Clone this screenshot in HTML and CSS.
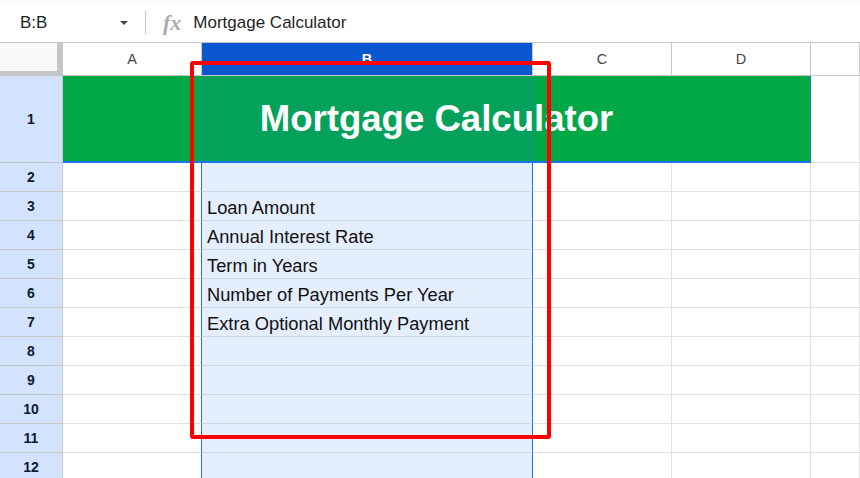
FILE: index.html
```html
<!DOCTYPE html>
<html lang="en">
<head>
    <meta charset="UTF-8">
    <meta name="viewport" content="width=device-width, initial-scale=1.0">
    <title>Mortgage Calculator</title>
    <link rel="stylesheet" href="styles.css">
</head>
<body>
    <div class="sheet">
        <div class="toolbar">
            <div class="namebox">
                <span>B:B</span>
                <span class="caret"></span>
            </div>
            <div class="divider"></div>
            <span class="fx">fx</span>
            <span class="formula">Mortgage Calculator</span>
        </div>

        <div class="grid">
            <div class="corner"></div>
            <div class="colhead">A</div>
            <div class="colhead active">B</div>
            <div class="colhead">C</div>
            <div class="colhead">D</div>
            <div class="colhead"></div>

            <div class="rowhead">1</div>
            <div class="title">Mortgage Calculator</div>
            <div class="cell"></div>

            <div class="rowhead">2</div>
            <div class="cell a"></div><div class="cell b"></div><div class="cell"></div><div class="cell"></div><div class="cell"></div>
            <div class="rowhead">3</div>
            <div class="cell a"></div><div class="cell b">Loan Amount</div><div class="cell"></div><div class="cell"></div><div class="cell"></div>
            <div class="rowhead">4</div>
            <div class="cell a"></div><div class="cell b">Annual Interest Rate</div><div class="cell"></div><div class="cell"></div><div class="cell"></div>
            <div class="rowhead">5</div>
            <div class="cell a"></div><div class="cell b">Term in Years</div><div class="cell"></div><div class="cell"></div><div class="cell"></div>
            <div class="rowhead">6</div>
            <div class="cell a"></div><div class="cell b">Number of Payments Per Year</div><div class="cell"></div><div class="cell"></div><div class="cell"></div>
            <div class="rowhead">7</div>
            <div class="cell a"></div><div class="cell b">Extra Optional Monthly Payment</div><div class="cell"></div><div class="cell"></div><div class="cell"></div>
            <div class="rowhead">8</div>
            <div class="cell a"></div><div class="cell b"></div><div class="cell"></div><div class="cell"></div><div class="cell"></div>
            <div class="rowhead">9</div>
            <div class="cell a"></div><div class="cell b"></div><div class="cell"></div><div class="cell"></div><div class="cell"></div>
            <div class="rowhead">10</div>
            <div class="cell a"></div><div class="cell b"></div><div class="cell"></div><div class="cell"></div><div class="cell"></div>
            <div class="rowhead">11</div>
            <div class="cell a"></div><div class="cell b"></div><div class="cell"></div><div class="cell"></div><div class="cell"></div>
            <div class="rowhead">12</div>
            <div class="cell a"></div><div class="cell b"></div><div class="cell"></div><div class="cell"></div><div class="cell"></div>
        </div>

        <div class="callout"></div>
    </div>
</body>
</html>
```

FILE: styles.css
```css
* {
    box-sizing: border-box;
}
body {
    margin: 0;
    font-family: "Liberation Sans", Arial, sans-serif;
    color: #1f1f1f;
    background: #fff;
    overflow: hidden;
}
.sheet {
    position: relative;
    width: 860px;
    height: 478px;
    overflow: hidden;
}

/* formula bar */
.toolbar {
    height: 43px;
    display: flex;
    align-items: center;
    border-top: 3px solid #f9fbfd;
    border-bottom: 1px solid #c4c7c5;
}
.namebox {
    width: 137px;
    padding: 0 9px 0 20px;
    display: flex;
    align-items: center;
    justify-content: space-between;
    font-size: 17px;
}
.caret {
    width: 0;
    height: 0;
    border-left: 4.5px solid transparent;
    border-right: 4.5px solid transparent;
    border-top: 4.5px solid #444746;
}
.divider {
    width: 1px;
    height: 23px;
    margin-left: 8px;
    background: #c4c7c5;
}
.fx {
    margin-left: 17px;
    font-family: "Liberation Serif", serif;
    font-style: italic;
    font-weight: bold;
    font-size: 22px;
    color: #a8abaf;
}
.formula {
    margin-left: 12px;
    font-size: 17px;
}

/* grid */
.grid {
    display: grid;
    grid-template-columns: 63px 139px 331px 139px 139px 1fr;
    grid-template-rows: 33px 87px repeat(11, 29px);
}
.corner {
    background: #f8f9fa;
    border-right: 6px solid #c4c7c5;
    border-bottom: 5px solid #c4c7c5;
}
.colhead {
    display: flex;
    align-items: center;
    justify-content: center;
    font-size: 14.5px;
    color: #444746;
    border-right: 1px solid #c7c7c7;
    border-bottom: 1px solid #c7c7c7;
}
.colhead.active {
    background: #0b57d0;
    color: #fff;
    font-weight: bold;
}
.rowhead {
    display: flex;
    align-items: center;
    justify-content: center;
    font-size: 14px;
    font-weight: bold;
    color: #0b1a33;
    background: #d3e3fd;
    border-right: 1px solid #c4c7c5;
    border-bottom: 1px solid #c4c7c5;
}
.cell {
    display: flex;
    align-items: flex-end;
    padding: 0 4px 1px 5px;
    font-size: 18.3px;
    color: #111;
    white-space: nowrap;
    border-right: 1px solid #e1e1e1;
    border-bottom: 1px solid #e1e1e1;
}
.cell.a {
    border-right-color: #1a73e8;
}
.cell.b {
    background: #e5eefd;
    border-right-color: #1a73e8;
    border-bottom-color: #cdd5e2;
}
.title {
    grid-column: 2 / 6;
    display: flex;
    align-items: center;
    justify-content: center;
    font-size: 36.6px;
    font-weight: bold;
    color: #fff;
    background: linear-gradient(to right,
        transparent 138px, rgba(26, 115, 232, .5) 138px, rgba(26, 115, 232, .5) 139px,
        rgba(26, 115, 232, .13) 139px, rgba(26, 115, 232, .13) 469px,
        rgba(26, 115, 232, .5) 469px, rgba(26, 115, 232, .5) 470px, transparent 470px), #00a846;
    border-right: 1px solid #1a73e8;
    border-bottom: 2px solid #1a73e8;
}

/* red annotation box */
.callout {
    position: absolute;
    left: 190px;
    top: 61px;
    width: 361px;
    height: 378px;
    border: 4px solid #ff0000;
    border-radius: 3px;
}
```
